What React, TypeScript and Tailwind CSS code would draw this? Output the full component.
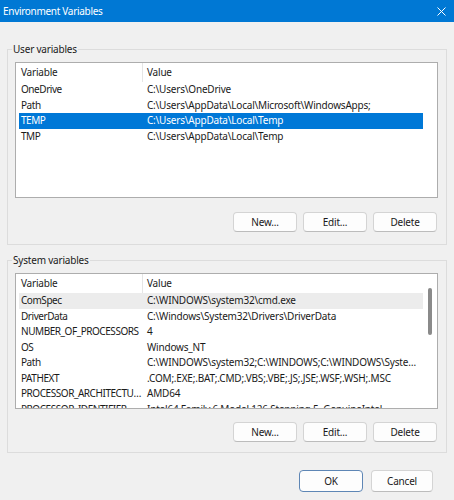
import type { ReactNode } from "react"

type Row = { name: string; value: string }

const userVars: Row[] = [
  { name: "OneDrive", value: "C:\\Users\\OneDrive" },
  { name: "Path", value: "C:\\Users\\AppData\\Local\\Microsoft\\WindowsApps;" },
  { name: "TEMP", value: "C:\\Users\\AppData\\Local\\Temp" },
  { name: "TMP", value: "C:\\Users\\AppData\\Local\\Temp" },
]

const systemVars: Row[] = [
  { name: "ComSpec", value: "C:\\WINDOWS\\system32\\cmd.exe" },
  { name: "DriverData", value: "C:\\Windows\\System32\\Drivers\\DriverData" },
  { name: "NUMBER_OF_PROCESSORS", value: "4" },
  { name: "OS", value: "Windows_NT" },
  { name: "Path", value: "C:\\WINDOWS\\system32;C:\\WINDOWS;C:\\WINDOWS\\System32\\Wbem;C:\\WINDOWS\\System32\\WindowsPowerShell" },
  { name: "PATHEXT", value: ".COM;.EXE;.BAT;.CMD;.VBS;.VBE;.JS;.JSE;.WSF;.WSH;.MSC" },
  { name: "PROCESSOR_ARCHITECTURE", value: "AMD64" },
  { name: "PROCESSOR_IDENTIFIER", value: "Intel64 Family 6 Model 126 Stepping 5, GenuineIntel" },
]

function Button({ children, primary }: { children: ReactNode; primary?: boolean }) {
  return (
    <button
      className={
        primary
          ? "w-[64px] h-[22px] rounded-[4px] border border-[#5e86b5] bg-[#fdfdfd] text-[#1a1a1a]"
          : "w-[64px] h-[20px] rounded-[4px] border border-[#d4d4d4] border-b-[#bcbcbc] bg-[#fdfdfd] text-[#1a1a1a]"
      }
    >
      {children}
    </button>
  )
}

function VarList({ rows, selected, hover, scroll }: { rows: Row[]; selected?: number; hover?: number; scroll?: boolean }) {
  return (
    <div className="ml-[3px] h-[136px] border border-[#adadad] bg-white flex overflow-hidden">
      <div className="flex-1 min-w-0 pl-[3px] overflow-hidden">
        {/* column headers */}
        <div className="h-[19px] flex items-center text-[#222]">
          <div className="w-[124px] h-full pl-[2px] flex items-center border-r border-[#e5e5e5]">Variable</div>
          <div className="pl-[4px]">Value</div>
        </div>
        {rows.map((r, i) => (
          <div
            key={r.name}
            className={
              i === selected
                ? "h-[15.5px] flex items-center bg-[#0078d7] text-white"
                : i === hover
                ? "h-[15.5px] flex items-center bg-[#ececec] text-[#1a1a1a]"
                : "h-[15.5px] flex items-center text-[#1a1a1a]"
            }
          >
            <div className="w-[124px] shrink-0 pl-[2px] pr-[1px] tracking-[-0.45px] truncate">{r.name}</div>
            <div className="flex-1 min-w-0 pl-[4px] pr-[4px] truncate">{r.value}</div>
          </div>
        ))}
      </div>
      <div className="w-[14px] shrink-0">
        {scroll && <div className="mt-[14px] ml-[5px] w-[4px] h-[47px] rounded-full bg-[#8a8a8a]" />}
      </div>
    </div>
  )
}

export default function App() {
  return (
    <div className="w-[454px] h-[500px] bg-[#f0f0f0] font-['Noto_Sans',sans-serif] text-[10px] tracking-[-0.2px] overflow-hidden">
      {/* title bar */}
      <div className="h-[22px] bg-[#0078d4] flex items-center justify-between pl-[3px] pr-[8px] text-white tracking-[-0.3px]">
        <span>Environment Variables</span>
        <svg width="9" height="9" viewBox="0 0 9 9">
          <path d="M0.5 0.5 L8.5 8.5 M8.5 0.5 L0.5 8.5" stroke="white" strokeWidth="1" />
        </svg>
      </div>

      <div className="px-[7px]">
        <fieldset className="min-w-0 mt-[19px] border border-[#dcdcdc] pl-[4px] pr-[8px] pt-[5px] pb-[12px]">
          <legend className="px-[1px] h-[16px] leading-[16px] text-[#1a1a1a]">User variables</legend>
          <VarList rows={userVars} selected={2} />
          <div className="mt-[14px] flex justify-end gap-[6px] pr-[1px]">
            <Button>New...</Button>
            <Button>Edit...</Button>
            <Button>Delete</Button>
          </div>
        </fieldset>

        <fieldset className="min-w-0 mt-[7px] border border-[#dcdcdc] pl-[4px] pr-[8px] pt-[5px] pb-[10px]">
          <legend className="px-[1px] h-[16px] leading-[16px] text-[#1a1a1a]">System variables</legend>
          <VarList rows={systemVars} hover={0} scroll />
          <div className="mt-[13px] flex justify-end gap-[6px] pr-[1px]">
            <Button>New...</Button>
            <Button>Edit...</Button>
            <Button>Delete</Button>
          </div>
        </fieldset>

        <div className="mt-[17px] flex justify-end gap-[8px] pr-[14px]">
          <Button primary>OK</Button>
          <button className="w-[62px] h-[22px] rounded-[4px] border border-[#d4d4d4] border-b-[#bcbcbc] bg-[#fdfdfd] text-[#1a1a1a]">
            Cancel
          </button>
        </div>
      </div>
    </div>
  )
}
